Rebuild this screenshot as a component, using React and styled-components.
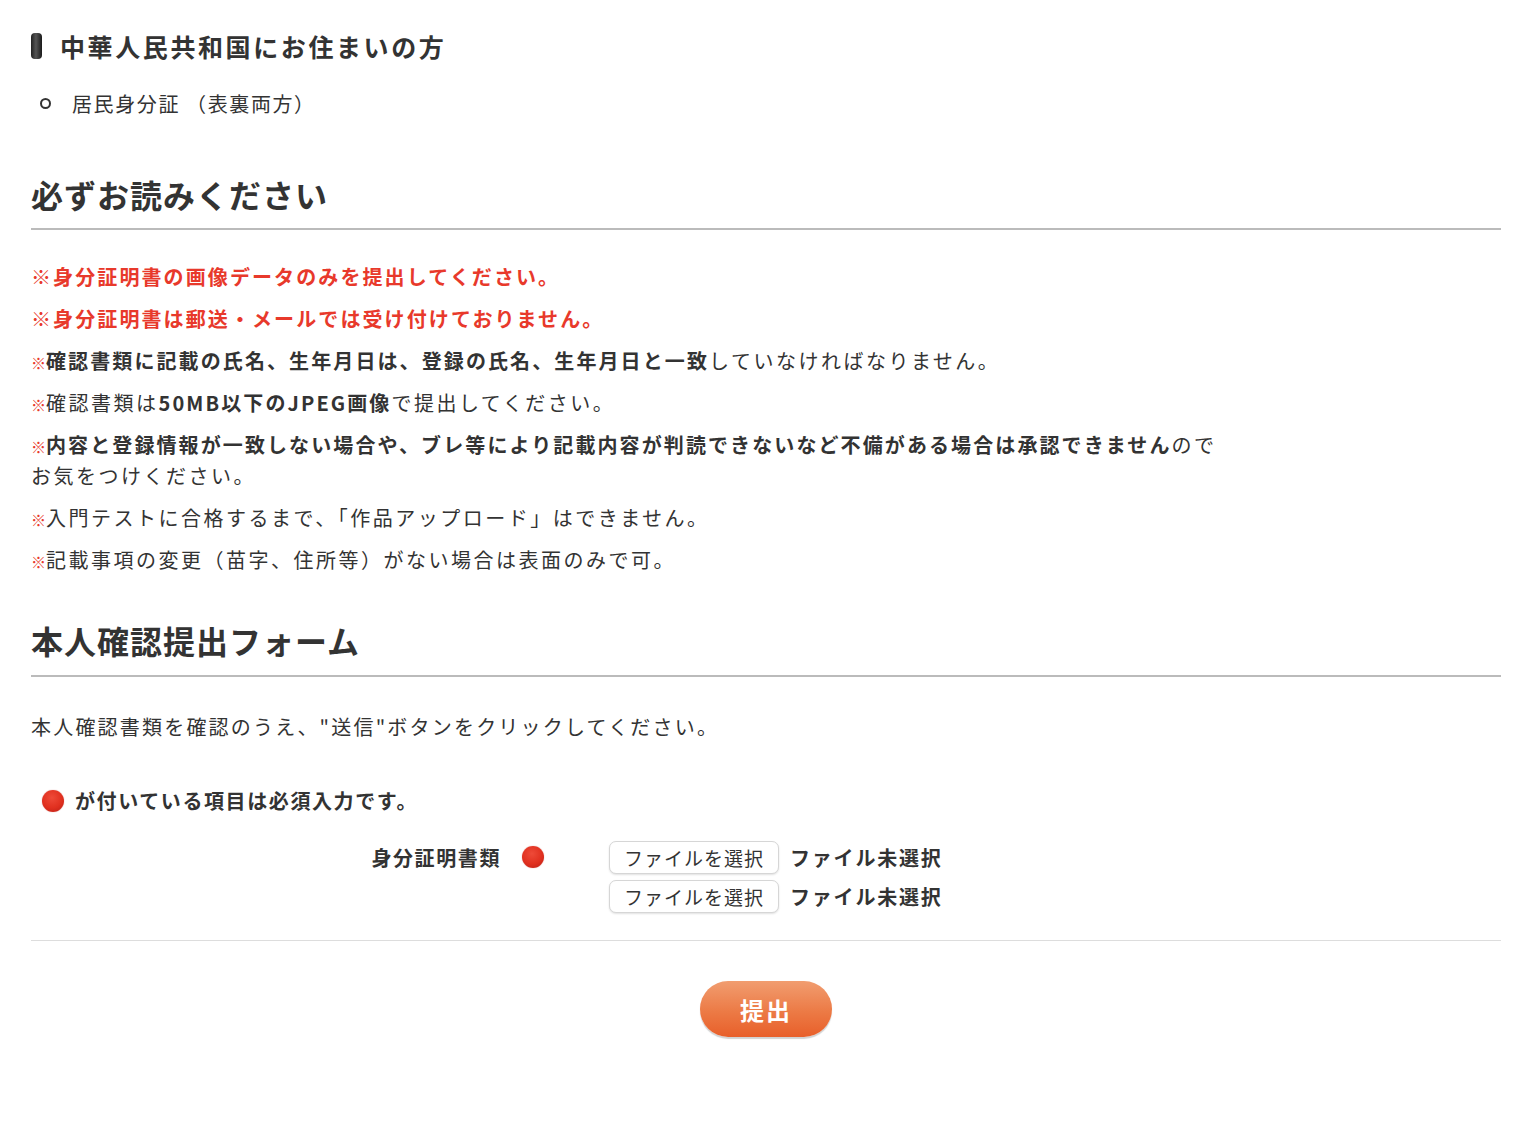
import React from 'react';
import styled, { createGlobalStyle } from 'styled-components';

const GlobalStyle = createGlobalStyle`
  body {
    margin: 0;
    background: #fff;
    color: #333;
    font-family: "Noto Sans CJK JP", "Noto Sans", sans-serif;
  }
`;

const Page = styled.div`
  padding: 31px 30px 80px 31px;
`;

const CountryTitle = styled.h3`
  display: flex;
  align-items: center;
  gap: 18px;
  margin: 0;
  height: 30px;
  font-size: 25px;
  font-weight: 700;
  letter-spacing: 2.6px;
  color: #333;
`;

const TitleBar = styled.span`
  display: block;
  width: 11px;
  height: 26px;
  border-radius: 4px;
  background: linear-gradient(90deg, #222 0%, #555 45%, #1a1a1a 100%);
`;

const DocList = styled.ul`
  list-style: none;
  margin: 27px 0 0;
  padding: 0;
`;

const DocItem = styled.li`
  display: flex;
  align-items: center;
  height: 30px;
  font-size: 20px;
  letter-spacing: 1.6px;
`;

const Bullet = styled.span`
  display: block;
  width: 7px;
  height: 7px;
  border: 2px solid #333;
  border-radius: 50%;
  margin: 0 21px 0 9px;
`;

const SectionTitle = styled.h2`
  margin: ${p => p.$top}px 0 0;
  padding-bottom: ${p => p.$pad}px;
  border-bottom: 2px solid #bbb;
  font-size: 32px;
  line-height: 40px;
  font-weight: 700;
  letter-spacing: 1px;
  color: #333;
`;

const Notes = styled.div`
  margin-top: 31px;
  display: flex;
  flex-direction: column;
  gap: 11px;
`;

const Note = styled.p`
  margin: 0;
  font-size: 20px;
  line-height: 31px;
  letter-spacing: ${p => (p.$alert ? '2.1px' : '2.5px')};
  color: ${p => (p.$alert ? '#e8392b' : '#333')};
  font-weight: ${p => (p.$alert ? 700 : 400)};
`;

const Mark = styled.span`
  color: #e8392b;
  font-size: 15px;
  line-height: 1;
  font-weight: 700;
  letter-spacing: 0;
`;

const Strong = styled.b`
  font-weight: 700;
  letter-spacing: 2.1px;
`;

const Intro = styled.p`
  margin: 34px 0 0;
  font-size: 20px;
  line-height: 31px;
  letter-spacing: 2.2px;
`;

const Required = styled.p`
  display: flex;
  align-items: center;
  margin: 43px 0 0 11px;
  font-size: 20px;
  line-height: 31px;
  font-weight: 700;
  letter-spacing: 1.6px;
  gap: 11px;
`;

const Dot = styled.span`
  display: block;
  flex: none;
  width: 22px;
  height: 22px;
  border-radius: 50%;
  background: radial-gradient(circle at 45% 35%, #ee4a38 0%, #e0301f 55%, #b91d14 100%);
  box-shadow: 0 0 1px rgba(180, 30, 20, 0.6);
`;

const FormRow = styled.div`
  display: flex;
  align-items: flex-start;
  margin-top: 24px;
  padding-bottom: 27px;
  border-bottom: 1px solid #ddd;
`;

const Label = styled.div`
  display: flex;
  align-items: center;
  justify-content: flex-end;
  gap: 21px;
  width: 513px;
  height: 34px;
  font-size: 20px;
  font-weight: 700;
  letter-spacing: 1.6px;
`;

const Inputs = styled.div`
  display: flex;
  flex-direction: column;
  gap: 5px;
  margin-left: 65px;
`;

const FileRow = styled.div`
  display: flex;
  align-items: center;
  gap: 11px;
  height: 34px;
`;

const FileButton = styled.button`
  height: 33px;
  padding: 0 14px;
  background: #fff;
  border: 1px solid #d6d6d6;
  border-radius: 7px;
  box-shadow: 0 1px 2px rgba(0, 0, 0, 0.12);
  font-family: inherit;
  font-size: 19px;
  letter-spacing: 1px;
  color: #333;
`;

const FileStatus = styled.span`
  font-size: 20px;
  font-weight: 700;
  letter-spacing: 1.8px;
`;

const Actions = styled.div`
  display: flex;
  justify-content: center;
  margin-top: 40px;
`;

const SubmitButton = styled.button`
  width: 132px;
  height: 56px;
  border: none;
  border-radius: 28px;
  background: linear-gradient(180deg, #f19d70 0%, #ec7a45 55%, #e85f2a 100%);
  box-shadow: 0 2px 1px rgba(0, 0, 0, 0.18);
  color: #fff;
  font-family: inherit;
  font-size: 24px;
  font-weight: 700;
  letter-spacing: 2px;
`;

const FileField = () => (
  <FileRow>
    <FileButton type="button">ファイルを選択</FileButton>
    <FileStatus>ファイル未選択</FileStatus>
  </FileRow>
);

export default function App() {
  return (
    <Page>
      <GlobalStyle />
      <CountryTitle>
        <TitleBar />
        中華人民共和国にお住まいの方
      </CountryTitle>
      <DocList>
        <DocItem>
          <Bullet />
          居民身分証 （表裏両方）
        </DocItem>
      </DocList>

      <SectionTitle $top={56} $pad={14}>必ずお読みください</SectionTitle>
      <Notes>
        <Note $alert>※身分証明書の画像データのみを提出してください。</Note>
        <Note $alert>※身分証明書は郵送・メールでは受け付けておりません。</Note>
        <Note>
          <Mark>※</Mark>
          <Strong>確認書類に記載の氏名、生年月日は、登録の氏名、生年月日と一致</Strong>していなければなりません。
        </Note>
        <Note>
          <Mark>※</Mark>確認書類は<Strong>50MB以下のJPEG画像</Strong>で提出してください。
        </Note>
        <Note>
          <Mark>※</Mark>
          <Strong>内容と登録情報が一致しない場合や、ブレ等により記載内容が判読できないなど不備がある場合は承認できません</Strong>ので
          <br />
          お気をつけください。
        </Note>
        <Note>
          <Mark>※</Mark>入門テストに合格するまで、「作品アップロード」はできません。
        </Note>
        <Note>
          <Mark>※</Mark>記載事項の変更（苗字、住所等）がない場合は表面のみで可。
        </Note>
      </Notes>

      <SectionTitle $top={45} $pad={15}>本人確認提出フォーム</SectionTitle>
      <Intro>本人確認書類を確認のうえ、"送信"ボタンをクリックしてください。</Intro>
      <Required>
        <Dot />
        が付いている項目は必須入力です。
      </Required>

      <FormRow>
        <Label>
          身分証明書類
          <Dot />
        </Label>
        <Inputs>
          <FileField />
          <FileField />
        </Inputs>
      </FormRow>

      <Actions>
        <SubmitButton type="button">提出</SubmitButton>
      </Actions>
    </Page>
  );
}
